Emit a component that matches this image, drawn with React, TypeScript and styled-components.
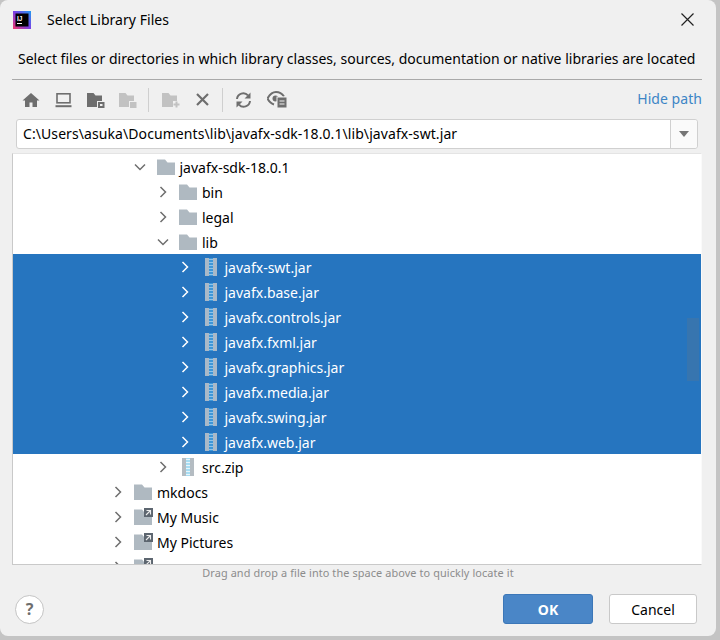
import React from "react";
import styled, { createGlobalStyle } from "styled-components";

const Global = createGlobalStyle`
  html, body { margin: 0; padding: 0; width: 720px; height: 640px; overflow: hidden; background: #c4c4c4; }
  body { font-family: "Noto Sans", "Open Sans", sans-serif; }
  * { box-sizing: border-box; }
`;

const Dialog = styled.div`
  width: 716px;
  height: 636px;
  background: #f0f0f0;
  border-radius: 8px;
  display: flex;
  flex-direction: column;
  color: #000;
  font-size: 14px;
`;
const TitleBar = styled.div`
  height: 39px;
  padding: 0 22px 0 13px;
  display: flex;
  align-items: center;
`;
const Title = styled.div`
  margin-left: 16px;
  flex: 1;
  letter-spacing: 0.05px;
`;
const Description = styled.div`
  padding: 10px 0 0 18px;
  height: 40px;
  white-space: nowrap;
  line-height: 20px;
  letter-spacing: 0.015px;
`;
const Divider = styled.div`
  margin: 0 14px 0 12px;
  height: 1px;
  background: #a9a9a9;
`;
const Toolbar = styled.div`
  height: 39px;
  padding: 0 14px 0 15px;
  display: flex;
  align-items: center;
`;
const ToolButton = styled.div<{ $w?: number }>`
  width: ${(p) => p.$w ?? 32}px;
  height: 24px;
  display: flex;
  align-items: center;
  justify-content: center;
`;
const ToolSep = styled.div<{ $before?: number }>`
  width: 1px;
  height: 24px;
  background: #cfcfcf;
  margin: 0 4px 0 ${(p) => p.$before ?? 4}px;
`;
const HidePath = styled.div`
  margin-left: auto;
  color: #3d85c6;
  font-size: 14px;
  position: relative;
  top: -1px;
  letter-spacing: 0.05px;
`;
const PathBox = styled.div`
  margin: 0 18px 0 16px;
  height: 30px;
  display: flex;
  background: #fff;
  border: 1px solid #d0d0d0;
  border-radius: 3px;
`;
const PathText = styled.div`
  flex: 1;
  padding: 0 6px;
  line-height: 27px;
  white-space: nowrap;
  overflow: hidden;
  letter-spacing: 0.08px;
`;
const PathArrow = styled.div`
  width: 27px;
  background: #fafafa;
  border-left: 1px solid #d0d0d0;
  display: flex;
  align-items: center;
  justify-content: center;
  border-radius: 0 3px 3px 0;
`;
const ArrowDown = styled.div`
  width: 0;
  height: 0;
  border-left: 5.5px solid transparent;
  border-right: 5.5px solid transparent;
  border-top: 6px solid #757575;
`;
const Tree = styled.div`
  position: relative;
  margin: 4px 14px 0 12px;
  height: 412px;
  background: #fff;
  border: 1px solid #c9c9c9;
  border-top-color: #e4e4e4;
  border-right-color: #fafafa;
  overflow: hidden;
`;
const Row = styled.div<{ $level: number; $selected?: boolean }>`
  height: 25px;
  display: flex;
  align-items: center;
  padding-left: ${(p) => 98 + p.$level * 22.5}px;
  background: ${(p) => (p.$selected ? "#2675bf" : "transparent")};
  color: ${(p) => (p.$selected ? "#fff" : "#000")};
  white-space: nowrap;
`;
const Chevron = styled.div`
  width: 13px;
  height: 25px;
  display: flex;
  align-items: center;
  justify-content: center;
  margin-right: 9px;
`;
const RowIcon = styled.div`
  width: 20px;
  height: 25px;
  margin-right: 4px;
  display: flex;
  align-items: center;
  justify-content: flex-end;
`;
const RowLabel = styled.div`
  padding-top: 2px;
`;
const Thumb = styled.div`
  position: absolute;
  left: 674px;
  top: 164px;
  width: 12px;
  height: 63px;
  background: rgba(120, 120, 120, 0.22);
`;
const Hint = styled.div`
  height: 19px;
  text-align: center;
  font-size: 10.9px;
  line-height: 16px;
  color: #8c8c8c;
  letter-spacing: 0.1px;
`;
const Footer = styled.div`
  padding: 10px 19px 0 15px;
  display: flex;
  align-items: center;
  gap: 16px;
`;
const Help = styled.div`
  width: 29px;
  height: 29px;
  margin-right: auto;
  border-radius: 50%;
  background: #fff;
  border: 1px solid #c4c4c4;
  color: #6e6e6e;
  font-weight: 700;
  font-size: 16px;
  display: flex;
  align-items: center;
  justify-content: center;
`;
const Button = styled.div<{ $primary?: boolean }>`
  width: ${(p) => (p.$primary ? 90 : 88)}px;
  height: 30px;
  border-radius: 3px;
  display: flex;
  align-items: center;
  justify-content: center;
  background: ${(p) => (p.$primary ? "#4a86c7" : "#fff")};
  border: 1px solid ${(p) => (p.$primary ? "#3c77b8" : "#c9c9c9")};
  color: ${(p) => (p.$primary ? "#fff" : "#000")};
  font-weight: ${(p) => (p.$primary ? 700 : 400)};
`;

const ChevronIcon = ({ open, light }: { open?: boolean; light?: boolean }) => (
  <svg width="12" height="12" viewBox="0 0 12 12" fill="none" stroke={light ? "#fff" : "#6e6e6e"} strokeWidth="1.5">
    <path d={open ? "M1 3.5L6 8.5L11 3.5" : "M3.5 1L8.5 6L3.5 11"} />
  </svg>
);
const FolderIcon = ({ link }: { link?: boolean }) => (
  <svg width="19" height="18" viewBox="0 0 19 18">
    <path d="M0 1.5h8l2.5 3H18V17H0z" fill="#afb9c1" />
    {link && (
      <>
        <rect x="10" y="0" width="9" height="9" fill="#5d6670" />
        <path d="M12 7L16.5 2.5M12.5 2.5h4v4" stroke="#eeeeee" strokeWidth="1.1" fill="none" />
      </>
    )}
  </svg>
);
const ArchiveIcon = ({ light }: { light?: boolean }) => (
  <svg width="17" height="18" viewBox="0 0 17 18">
    <rect x="1" y="0" width="12" height="18" fill={light ? "#a9b9c8" : "#b4bcc2"} />
    <rect x="5" y="0" width="4" height="18" fill={light ? "#3f97d8" : "#a6dcf2"} />
    <path d="M5 1.5h4M5 4.5h4M5 7.5h4M5 10.5h4M5 13.5h4M5 16.5h4" stroke={light ? "#8fc4ea" : "#e6f5fb"} strokeWidth="1" />
  </svg>
);
const Logo = () => (
  <svg width="18" height="18" viewBox="0 0 18 18">
    <defs>
      <linearGradient id="lg" x1="0" y1="1" x2="1" y2="0">
        <stop offset="0" stopColor="#f0386b" />
        <stop offset="0.5" stopColor="#7b3fe4" />
        <stop offset="1" stopColor="#1f9bf0" />
      </linearGradient>
    </defs>
    <rect width="18" height="18" fill="url(#lg)" />
    <rect x="2.5" y="2.5" width="13" height="13" fill="#000" />
    <text x="4" y="9.5" fontSize="6.5" fontWeight="700" fill="#fff" fontFamily="Liberation Sans, sans-serif">IJ</text>
    <rect x="4" y="12" width="5" height="1" fill="#fff" />
  </svg>
);

const tool = "#6e6e6e";
const dim = "#c2c2c2";
const HomeIcon = () => (
  <svg width="18" height="16" viewBox="0 0 18 16"><path d="M9 1L0.5 8.5H3V15H7.5V10.5H10.5V15H15V8.5H17.5z" fill={tool} /></svg>
);
const ComputerIcon = () => (
  <svg width="17" height="16" viewBox="0 0 17 16" fill="none" stroke={tool}>
    <rect x="2" y="1.8" width="13" height="9" strokeWidth="1.6" />
    <path d="M0.5 14.2h16" strokeWidth="2" />
  </svg>
);
const TreeFolderTool = ({ color }: { color: string }) => (
  <svg width="18" height="16" viewBox="0 0 18 16">
    <path d="M0 1h6.5l2 2.5H15V9H10v6H0z" fill={color} />
    <rect x="11" y="10" width="6.5" height="6" fill={color} />
    {color === tool && <rect x="13" y="12" width="2.5" height="2" fill="#f0f0f0" />}
  </svg>
);
const NewFolderIcon = () => (
  <svg width="18" height="16" viewBox="0 0 18 16">
    <path d="M0 1h6.5l2 2.5H15V9h-4v6H0z" fill={dim} />
    <path d="M14.5 9.5v6M11.5 12.5h6" stroke={dim} strokeWidth="2" />
  </svg>
);
const CloseTool = () => (
  <svg width="13" height="13" viewBox="0 0 13 13"><path d="M1 1L12 12M12 1L1 12" stroke={tool} strokeWidth="2.2" /></svg>
);
const RefreshIcon = () => (
  <svg width="17" height="16" viewBox="0 0 17 16" fill="none">
    <path d="M2 7a6.3 6.3 0 0 1 11-3.6" stroke={tool} strokeWidth="2" />
    <path d="M15 9a6.3 6.3 0 0 1 -11 3.6" stroke={tool} strokeWidth="2" />
    <path d="M15.5 0.5v6h-6z M1.5 15.5v-6h6z" fill={tool} />
  </svg>
);
const EyeIcon = () => (
  <svg width="20" height="17" viewBox="0 0 20 17">
    <path d="M0.5 7.5C3 3 6 1 9 1s6 1.5 8 4.5" fill="none" stroke={tool} strokeWidth="2" />
    <path d="M0.5 7.5C2 10.5 4 12.5 7 13.5" fill="none" stroke={tool} strokeWidth="2" />
    <circle cx="8.5" cy="7.5" r="3" fill={tool} />
    <rect x="10" y="6" width="10" height="11" fill={tool} stroke="#f0f0f0" />
    <path d="M12.5 10h5M12.5 13h5" stroke="#f0f0f0" />
  </svg>
);
const CloseIcon = () => (
  <svg width="13" height="13" viewBox="0 0 13 13"><path d="M0.5 0.5L12.5 12.5M12.5 0.5L0.5 12.5" stroke="#222" strokeWidth="1.2" /></svg>
);

type Item = { label: string; level: number; open?: boolean; kind: "folder" | "link" | "archive"; selected?: boolean };
const jars = ["javafx-swt.jar", "javafx.base.jar", "javafx.controls.jar", "javafx.fxml.jar", "javafx.graphics.jar", "javafx.media.jar", "javafx.swing.jar", "javafx.web.jar"];
const items: Item[] = [
  { label: "javafx-sdk-18.0.1", level: 1, open: true, kind: "folder" },
  { label: "bin", level: 2, kind: "folder" },
  { label: "legal", level: 2, kind: "folder" },
  { label: "lib", level: 2, open: true, kind: "folder" },
  ...jars.map((label): Item => ({ label, level: 3, kind: "archive", selected: true })),
  { label: "src.zip", level: 2, kind: "archive" },
  { label: "mkdocs", level: 0, kind: "folder" },
  { label: "My Music", level: 0, kind: "link" },
  { label: "My Pictures", level: 0, kind: "link" },
  { label: "", level: 0, kind: "link" },
];

export default function App() {
  return (
    <>
      <Global />
      <Dialog>
        <TitleBar>
          <Logo />
          <Title>Select Library Files</Title>
          <CloseIcon />
        </TitleBar>
        <Description>Select files or directories in which library classes, sources, documentation or native libraries are located</Description>
        <Divider />
        <Toolbar>
          <ToolButton><HomeIcon /></ToolButton>
          <ToolButton><ComputerIcon /></ToolButton>
          <ToolButton $w={33}><TreeFolderTool color={tool} /></ToolButton>
          <ToolButton><TreeFolderTool color={dim} /></ToolButton>
          <ToolSep />
          <ToolButton $w={36}><NewFolderIcon /></ToolButton>
          <ToolButton $w={26}><CloseTool /></ToolButton>
          <ToolSep $before={7} />
          <ToolButton><RefreshIcon /></ToolButton>
          <ToolButton $w={36}><EyeIcon /></ToolButton>
          <HidePath>Hide path</HidePath>
        </Toolbar>
        <PathBox>
          <PathText>C:\Users\asuka\Documents\lib\javafx-sdk-18.0.1\lib\javafx-swt.jar</PathText>
          <PathArrow><ArrowDown /></PathArrow>
        </PathBox>
        <Tree>
          {items.map((it, i) => (
            <Row key={i} $level={it.level} $selected={it.selected}>
              <Chevron><ChevronIcon open={it.open} light={it.selected} /></Chevron>
              <RowIcon>
                {it.kind === "archive" ? <ArchiveIcon light={it.selected} /> : <FolderIcon link={it.kind === "link"} />}
              </RowIcon>
              <RowLabel>{it.label}</RowLabel>
            </Row>
          ))}
          <Thumb />
        </Tree>
        <Hint>Drag and drop a file into the space above to quickly locate it</Hint>
        <Footer>
          <Help>?</Help>
          <Button $primary>OK</Button>
          <Button>Cancel</Button>
        </Footer>
      </Dialog>
    </>
  );
}
